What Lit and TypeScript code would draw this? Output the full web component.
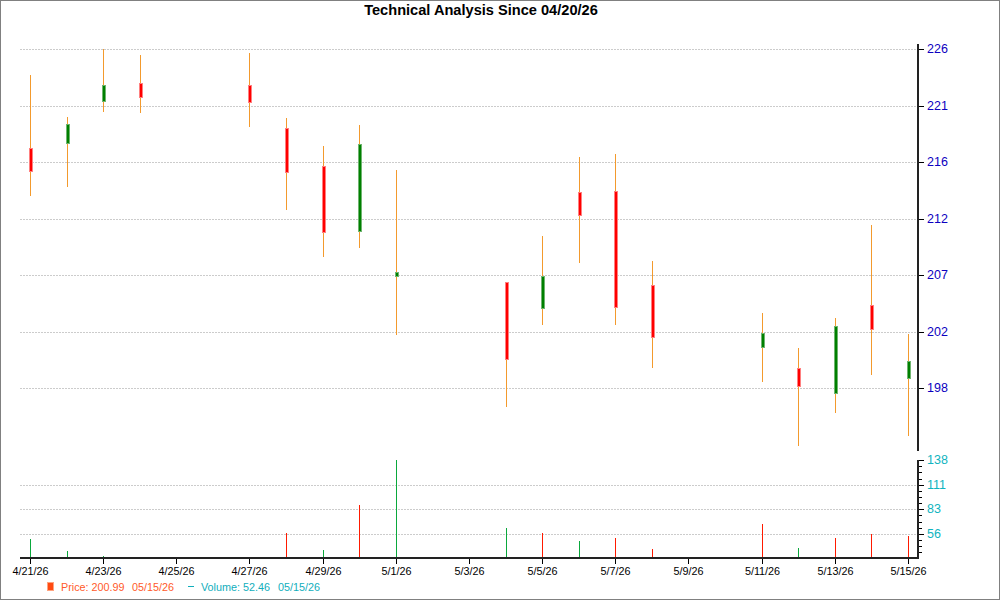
import { LitElement, html, svg, css } from "lit";
import { customElement } from "lit/decorators.js";

type Candle = [number, number, number, number, number, "up" | "down"];
const candles: Candle[] = [
  [30, 75, 196, 148, 172, "down"],
  [67, 117, 187, 124, 144, "up"],
  [103, 49, 112, 85, 102, "up"],
  [140, 55, 113, 83, 98, "down"],
  [249, 53, 127, 85, 103, "down"],
  [286, 118, 210, 128, 173, "down"],
  [323, 146, 257, 166, 233, "down"],
  [359, 125, 248, 144, 232, "up"],
  [396, 170, 335, 272, 277, "up"],
  [506, 282, 407, 282, 360, "down"],
  [542, 236, 325, 276, 309, "up"],
  [579, 157, 263, 192, 216, "down"],
  [615, 154, 325, 191, 308, "down"],
  [652, 261, 368, 285, 338, "down"],
  [762, 313, 382, 333, 348, "up"],
  [798, 348, 446, 368, 387, "down"],
  [835, 318, 413, 326, 394, "up"],
  [871, 225, 375, 305, 330, "down"],
  [908, 334, 436, 361, 379, "up"],
];
const volumes: [number, number, "up" | "down"][] = [
  [30, 539, "up"], [67, 551, "up"], [103, 556, "up"], [286, 533, "down"], [323, 550, "up"],
  [359, 505, "down"], [396, 460, "up"], [506, 528, "up"], [542, 533, "down"], [579, 541, "up"],
  [615, 538, "down"], [652, 549, "down"], [762, 524, "down"], [798, 548, "up"], [835, 538, "down"],
  [871, 534, "down"], [908, 536, "down"],
];
const priceTicks: [number, string][] = [[49, "226"], [106, "221"], [162, "216"], [219, "212"], [275, "207"], [332, "202"], [388, "198"]];
const volTicks: [number, string][] = [[460, "138"], [485, "111"], [509, "83"], [534, "56"]];
const minorTicks = [466, 472, 479, 491, 497, 503, 515, 522, 528, 540, 546, 552];
const dates: [number, string][] = [
  [30, "4/21/26"], [103, "4/23/26"], [176, "4/25/26"], [249, "4/27/26"], [323, "4/29/26"], [396, "5/1/26"],
  [469, "5/3/26"], [542, "5/5/26"], [615, "5/7/26"], [688, "5/9/26"], [762, "5/11/26"], [835, "5/13/26"], [908, "5/15/26"],
];

@customElement("app-root")
export class AppRoot extends LitElement {
  static styles = css`
    :host { display: block; width: 1000px; height: 600px; background: #fff; }
    svg { display: block; shape-rendering: crispEdges; }
    text { font-family: "Liberation Sans", Arial, sans-serif; }
    .title { font-size: 14.6px; font-weight: 700; fill: #000; text-anchor: middle; }
    .frame { fill: none; stroke: #808080; }
    .grid { stroke: #cccccc; stroke-dasharray: 2 1; }
    .axis { stroke: #000; stroke-width: 1; }
    .axis-thick { stroke: #222; stroke-width: 2; }
    .wick { stroke: #f39a2d; }
    .halo-up { fill: #6fb56f; }
    .halo-down { fill: #ff8080; }
    .body-up { fill: #008000; }
    .body-down { fill: #ff0000; }
    .vol-up { stroke: #0aa83c; }
    .vol-down { stroke: #ff1a00; }
    .price-label { font-size: 12.5px; fill: #0c00c0; }
    .vol-label { font-size: 12.5px; fill: #10b4c0; }
    .date { font-size: 10.8px; fill: #000; text-anchor: middle; }
    .legend { font-size: 10.8px; }
    .legend-price { fill: #ff5a2a; }
    .legend-vol { fill: #10aebc; }
    .marker { fill: #ff4a12; }
    .marker-halo { fill: #ffa37f; }
    .dash { stroke: #10aebc; }
  `;

  render() {
    return html`<svg width="1000" height="600" viewBox="0 0 1000 600" xmlns="http://www.w3.org/2000/svg">
      <rect class="frame" x="0.5" y="0.5" width="999" height="599"></rect>
      <text class="title" x="481" y="15">Technical Analysis Since 04/20/26</text>
      ${[...priceTicks, ...volTicks.slice(1)].map(([y]) => svg`<line class="grid" x1="20" x2="917" y1=${y + 0.5} y2=${y + 0.5}></line>`)}
      ${candles.map(([x, wt, wb, bt, bb, dir]) => svg`
        <line class="wick" x1=${x + 0.5} x2=${x + 0.5} y1=${wt} y2=${wb}></line>
        <rect class=${"halo-" + dir} x=${x - 1} y=${bt} width="4" height=${bb - bt}></rect>
        <rect class=${"body-" + dir} x=${x} y=${bt + 1} width="2" height=${bb - bt - 2}></rect>`)}
      ${volumes.map(([x, t, dir]) => svg`<line class=${"vol-" + dir} x1=${x + 0.5} x2=${x + 0.5} y1=${t} y2="558"></line>`)}
      <line class="axis-thick" x1="918" x2="918" y1="44" y2="451"></line>
      <line class="axis-thick" x1="918" x2="918" y1="460" y2="559"></line>
      <line class="axis-thick" x1="20" x2="919" y1="558" y2="558"></line>
      ${priceTicks.map(([y, l]) => svg`
        <line class="axis" x1="919" x2="924" y1=${y + 0.5} y2=${y + 0.5}></line>
        <text class="price-label" x="927" y=${y + 4}>${l}</text>`)}
      ${volTicks.map(([y, l]) => svg`
        <line class="axis" x1="919" x2="924" y1=${y + 0.5} y2=${y + 0.5}></line>
        <text class="vol-label" x="927" y=${y + 4}>${l}</text>`)}
      ${minorTicks.map((y) => svg`<line class="axis" x1="919" x2="922" y1=${y + 0.5} y2=${y + 0.5}></line>`)}
      ${dates.map(([x, l]) => svg`
        <line class="axis" x1=${x + 0.5} x2=${x + 0.5} y1="559" y2="564"></line>
        <text class="date" x=${x + 0.5} y="575">${l}</text>`)}
      <rect class="marker-halo" x="47" y="582" width="7" height="9"></rect>
      <rect class="marker" x="48" y="583" width="5" height="7"></rect>
      <text class="legend legend-price" x="61" y="591">Price: 200.99</text>
      <text class="legend legend-price" x="132" y="591">05/15/26</text>
      <line class="dash" x1="188" x2="194" y1="586.5" y2="586.5"></line>
      <text class="legend legend-vol" x="201" y="591">Volume: 52.46</text>
      <text class="legend legend-vol" x="278" y="591">05/15/26</text>
    </svg>`;
  }
}
